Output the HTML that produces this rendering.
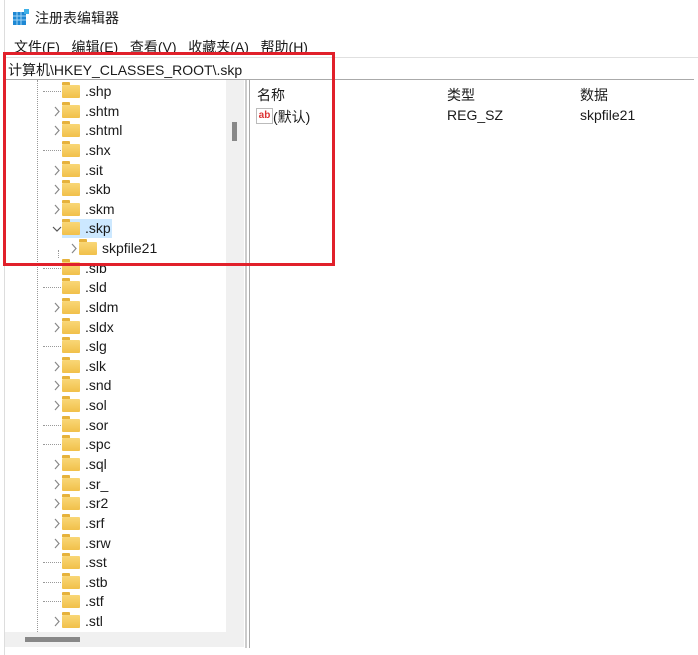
<!DOCTYPE html>
<html><head><meta charset="utf-8"><style>
body{margin:0;width:698px;height:655px;background:#fff;position:relative;overflow:hidden;font-family:"Liberation Sans","Noto Sans CJK SC",sans-serif;color:#1a1a1a}
.a{position:absolute;white-space:nowrap}
.t{font-size:14px}
.row{position:absolute;left:0;height:19px;font-size:14px}
.fold{position:absolute;left:62px;top:3px;width:18px;height:13px;background:linear-gradient(#f9d777,#f1c04a);border-radius:1px}
.fold:before{content:"";position:absolute;left:0;top:-3px;width:8px;height:3px;background:#e6b23c;border-radius:1px 1px 0 0}
.lab{position:absolute;left:85px;top:0;line-height:19px}
.arr{position:absolute;left:49px;top:1px;color:#888;font-size:13px;line-height:17px}
.dash{position:absolute;left:38px;top:9px;width:20px;border-top:1px dotted #999}
</style></head><body>
<div class="a" style="left:4px;top:0;width:1px;height:655px;background:#ddd"></div>
<div class="a" style="left:13px;top:9px;width:16px;height:16px">
<svg width="16" height="16"><rect x="0" y="3" width="13" height="13" fill="#1e88d4"/><path d="M0 7H13M0 11H13M4 3V16M8 3V16" stroke="#9fd3f5" stroke-width="1"/><rect x="11" y="0" width="5" height="5" fill="#3fb1e8"/></svg></div>
<div class="a t" style="left:35px;top:8px">注册表编辑器</div>
<div class="a t" style="left:14px;top:37px;word-spacing:0">文件(F)&nbsp;&nbsp;&nbsp;编辑(E)&nbsp;&nbsp;&nbsp;查看(V)&nbsp;&nbsp;&nbsp;收藏夹(A)&nbsp;&nbsp;&nbsp;帮助(H)</div>
<div class="a" style="left:4px;top:57px;width:694px;height:1px;background:#e0e0e0"></div>
<div class="a t" style="left:8px;top:60px">计算机\HKEY_CLASSES_ROOT\.skp</div>
<div class="a" style="left:4px;top:79px;width:690px;height:1px;background:#aaa"></div>
<!-- tree -->
<div class="a" style="left:5px;top:80px;width:221px;height:552px;overflow:hidden">
<div class="a" style="left:32px;top:0;height:552px;border-left:1px dotted #999"></div>
<div class="a" style="left:53px;top:170px;height:8px;border-left:1px dotted #999"></div>
</div>
<div id="tree" class="a" style="left:5px;top:82px;width:221px;height:550px;overflow:hidden"></div>
<div class="a" style="left:226px;top:80px;width:18px;height:552px;background:#f0f0f0"></div>
<div class="a" style="left:232px;top:122px;width:5px;height:19px;background:#888"></div>
<div class="a" style="left:5px;top:632px;width:239px;height:15px;background:#f0f0f0"></div>
<div class="a" style="left:25px;top:637px;width:55px;height:5px;background:#888"></div>
<div class="a" style="left:245px;top:80px;width:2px;height:568px;background:#ccc"></div>
<div class="a" style="left:249px;top:80px;width:1px;height:568px;background:#aaa"></div>
<!-- right -->
<div class="a t" style="left:257px;top:85px">名称</div>
<div class="a t" style="left:447px;top:85px">类型</div>
<div class="a t" style="left:580px;top:85px">数据</div>
<div class="a" style="left:256px;top:108px;width:15px;height:14px;border:1px solid #bbb;background:#fff;font:bold 10px 'Liberation Sans';color:#d33;line-height:13px;text-align:center">ab</div>
<div class="a t" style="left:273px;top:107px">(默认)</div>
<div class="a t" style="left:447px;top:107px">REG_SZ</div>
<div class="a t" style="left:580px;top:107px">skpfile21</div>
<!-- red box -->
<div class="a" style="left:3px;top:52px;width:326px;height:208px;border:3px solid #e1202a"></div>
<script>
var rows=[".shp",".shtm",".shtml",".shx",".sit",".skb",".skm",".skp","skpfile21",".slb",".sld",".sldm",".sldx",".slg",".slk",".snd",".sol",".sor",".spc",".sql",".sr_",".sr2",".srf",".srw",".sst",".stb",".stf",".stl"];
var noarr={".shp":1,".shx":1,".slb":1,".sld":1,".slg":1,".sor":1,".spc":1,".sst":1,".stb":1,".stf":1};
var h="";
rows.forEach(function(r,i){
 var y=(i*19.63).toFixed(1);
 var off=r=="skpfile21"?17:0;
 var s='<div class="row" style="top:'+y+'px;width:221px">';
 if(r==".skp") s+='<div style="position:absolute;left:57px;top:0;width:50px;height:19px;background:#cce8ff"></div>';
 if(noarr[r]) s+='<div class="dash"></div>';
 else s+='<div class="arr" style="left:'+(47+off)+'px">'+(r==".skp"?'<svg width="10" height="17"><path d="M1 7l4 4 4-4" fill="none" stroke="#555" stroke-width="1.2"/></svg>':'<svg width="10" height="17"><path d="M3 4l4 4.5-4 4.5" fill="none" stroke="#888" stroke-width="1.2"/></svg>')+'</div>';
 s+='<div class="fold" style="left:'+(57+off)+'px"></div><div class="lab" style="left:'+(80+off)+'px">'+r+'</div></div>';
 h+=s;
});
document.getElementById("tree").innerHTML=h;
</script>
</body></html>
